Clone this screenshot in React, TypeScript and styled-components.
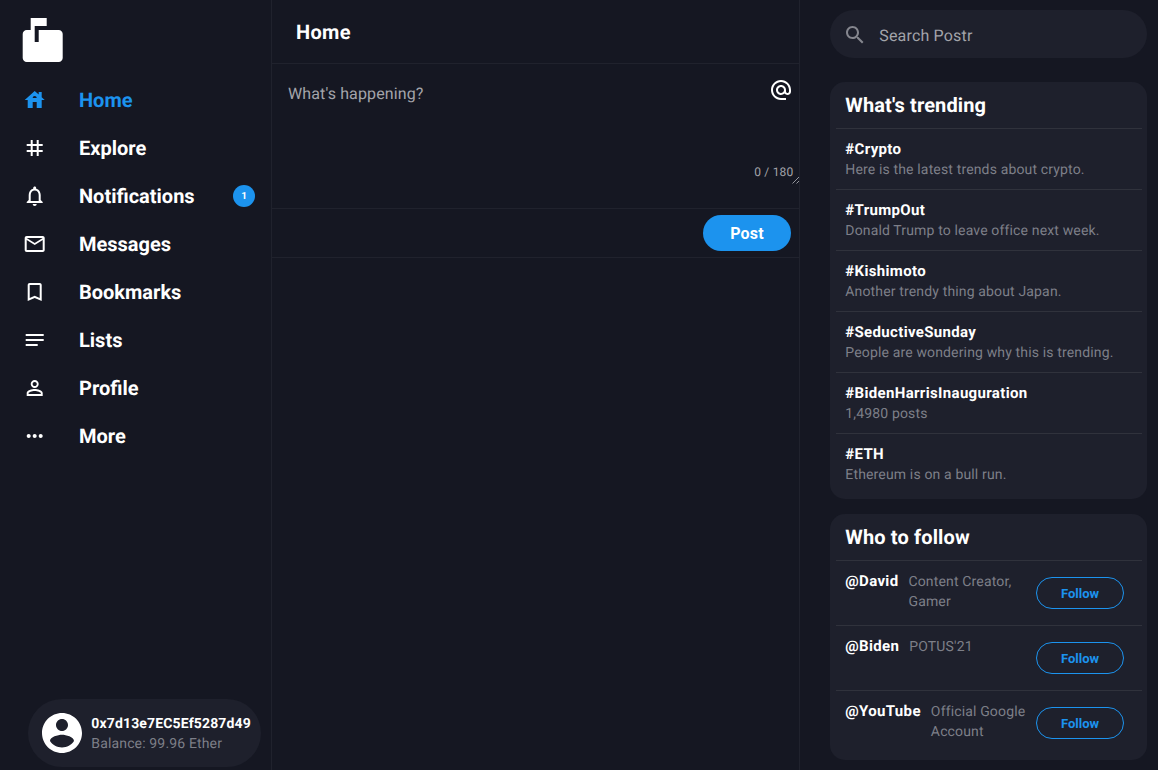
import React from "react";
import styled, { createGlobalStyle } from "styled-components";

const c = {
  bg: "#151722",
  card: "#1e202c",
  line: "#20222d",
  cardLine: "#30323c",
  blue: "#1c93ee",
  muted: "#7d7f88",
};

const Global = createGlobalStyle`
  *, *::before, *::after { box-sizing: border-box; }
  html, body { margin: 0; padding: 0; background: ${c.bg}; }
  body {
    font-family: Roboto, "Liberation Sans", sans-serif;
    color: #fff;
    overflow: hidden;
    text-rendering: geometricPrecision;
    -webkit-font-smoothing: antialiased;
  }
`;

const Page = styled.div`
  display: grid;
  grid-template-columns: 272px 528px 358px;
  width: 1158px;
  height: 770px;
`;

const Sidebar = styled.aside`
  display: flex;
  flex-direction: column;
  border-right: 1px solid ${c.line};
`;

const Logo = styled.div`
  display: flex;
  padding: 18px 0 10px 19px;
`;

const Nav = styled.nav`
  display: flex;
  flex-direction: column;
`;

const NavItem = styled.a<{ $active?: boolean }>`
  display: flex;
  align-items: center;
  height: 48px;
  padding: 0 16px 0 23px;
  color: ${(p) => (p.$active ? c.blue : "#fff")};
`;

const NavLabel = styled.span`
  flex: 1;
  margin-left: 32px;
  font-size: 20px;
  line-height: 24px;
  font-weight: 700;
`;

const Badge = styled.span`
  display: flex;
  align-items: center;
  justify-content: center;
  width: 22px;
  height: 22px;
  border-radius: 50%;
  background: ${c.blue};
  color: #fff;
  font-size: 10px;
  padding-top: 1px;
  font-weight: 700;
`;

const Account = styled.div`
  display: flex;
  align-items: center;
  width: 233px;
  height: 68px;
  margin: auto 0 3px 28px;
  padding-left: 10px;
  border-radius: 34px;
  background: ${c.card};
`;

const AccountText = styled.div`
  margin-left: 5.3px;
  padding-top: 1px;
  white-space: nowrap;
`;

const Feed = styled.main`
  border-right: 1px solid ${c.line};
`;

const FeedHeader = styled.header`
  display: flex;
  align-items: center;
  height: 64px;
  padding-left: 24px;
  border-bottom: 1px solid ${c.line};
  font-size: 20px;
  font-weight: 700;
  letter-spacing: 0.35px;
`;

const Composer = styled.section`
  display: flex;
  justify-content: space-between;
  height: 145px;
  padding: 14px 0 24px 16px;
  border-bottom: 1px solid ${c.line};
`;

const Prompt = styled.div`
  padding-top: 4px;
  font-size: 16px;
  line-height: 24px;
  letter-spacing: 0.12px;
  color: #a3a4aa;
`;

const ComposerSide = styled.div`
  display: flex;
  flex-direction: column;
  justify-content: space-between;
  align-items: flex-end;
`;

const Mention = styled.div`
  display: flex;
  margin-right: 6px;
`;

const Counter = styled.div`
  display: flex;
  align-items: flex-end;
  font-size: 12px;
  line-height: 24px;
  letter-spacing: 0.2px;
  color: #a3a4aa;
`;

const Actions = styled.div`
  display: flex;
  align-items: center;
  justify-content: flex-end;
  height: 49px;
  padding-right: 8px;
  border-bottom: 1px solid ${c.line};
`;

const PostButton = styled.button`
  width: 88px;
  height: 36px;
  padding: 2px 0 0;
  border: 0;
  border-radius: 18px;
  background: ${c.blue};
  color: #fff;
  font: 700 16px/20px Roboto, sans-serif;
  letter-spacing: 0.15px;
`;

const Aside = styled.aside`
  display: flex;
  flex-direction: column;
  padding: 10px 11px 0 30px;
`;

const Search = styled.div`
  display: flex;
  align-items: center;
  flex: none;
  height: 48px;
  padding: 2px 0 0 13px;
  border-radius: 24px;
  background: ${c.card};
  color: #a3a4aa;
  font-size: 16px;
  letter-spacing: 0.17px;
`;

const SearchText = styled.span`
  margin-left: 12.3px;
`;

const Card = styled.section<{ $top: number; $height: number }>`
  flex: none;
  height: ${(p) => p.$height}px;
  margin-top: ${(p) => p.$top}px;
  padding: 0 5px 0 6px;
  border-radius: 15px;
  background: ${c.card};
`;

const CardTitle = styled.h2`
  margin: 0;
  padding: 7px 9px 0 9.3px;
  height: 46px;
  font-size: 20px;
  line-height: 32px;
  font-weight: 700;
  letter-spacing: 0.13px;
`;

const Trend = styled.div`
  height: 61px;
  padding: 10px 9px 0 9.3px;
  border-top: 1px solid ${c.cardLine};
`;

const Strong = styled.div`
  font-size: 15px;
  line-height: 20px;
  font-weight: 700;
  letter-spacing: 0.34px;
`;

const Address = styled(Strong)`
  font-size: 14px;
  letter-spacing: 0.15px;
`;

const Muted = styled.div`
  padding-top: 1px;
  font-size: 14px;
  line-height: 20px;
  letter-spacing: 0.15px;
  color: ${c.muted};
`;

const Balance = styled(Muted)`
  padding-top: 0;
`;

const Person = styled.div`
  display: flex;
  height: 65px;
  padding: 10px 18px 0 9.3px;
  border-top: 1px solid ${c.cardLine};
`;

const Bio = styled(Muted)`
  flex: 1;
  margin: 0 9px 0 10px;
`;

const FollowButton = styled.button`
  flex: none;
  width: 88px;
  height: 32px;
  margin-top: 6px;
  padding: 2px 0 0;
  border: 1px solid ${c.blue};
  border-radius: 16px;
  background: transparent;
  color: ${c.blue};
  font: 700 13px/20px Roboto, sans-serif;
`;

const paths = {
  mailbox:
    "M20 6H10v6H8V4h6V0H6v6H4c-1.1 0-2 .9-2 2v12c0 1.1.9 2 2 2h16c1.1 0 2-.9 2-2V8c0-1.1-.9-2-2-2z",
  house:
    "M19 9.3V4h-3v2.6L12 3 2 12h3v8h5v-6h4v6h5v-8h3l-3-2.7zm-9 .7c0-1.1.9-2 2-2s2 .9 2 2h-4z",
  tag: "M20 10V8h-4V4h-2v4h-4V4H8v4H4v2h4v4H4v2h4v4h2v-4h4v4h2v-4h4v-2h-4v-4h4zm-6 4h-4v-4h4v4z",
  bell: "M12 22c1.1 0 2-.9 2-2h-4c0 1.1.9 2 2 2zm6-6v-5c0-3.07-1.63-5.64-4.5-6.32V4c0-.83-.67-1.5-1.5-1.5s-1.5.67-1.5 1.5v.68C7.64 5.36 6 7.92 6 11v5l-2 2v1h16v-1l-2-2zm-2 1H8v-6c0-2.48 1.51-4.5 4-4.5s4 2.02 4 4.5v6z",
  mail: "M22 6c0-1.1-.9-2-2-2H4c-1.1 0-2 .9-2 2v12c0 1.1.9 2 2 2h16c1.1 0 2-.9 2-2V6zm-2 0l-8 5-8-5h16zm0 12H4V8l8 5 8-5v10z",
  bookmark:
    "M17 3H7c-1.1 0-2 .9-2 2v16l7-3 7 3V5c0-1.1-.9-2-2-2zm0 15l-5-2.18L7 18V5h10v13z",
  notes: "M21 11.01L3 11v2h18zM3 16h12v2H3zM21 6H3v2.01L21 8z",
  person:
    "M12 5.9c1.16 0 2.1.94 2.1 2.1s-.94 2.1-2.1 2.1S9.9 9.16 9.9 8s.94-2.1 2.1-2.1m0 9c2.97 0 6.1 1.46 6.1 2.1v1.1H5.9V17c0-.64 3.13-2.1 6.1-2.1M12 4C9.79 4 8 5.79 8 8s1.79 4 4 4 4-1.79 4-4-1.79-4-4-4zm0 9c-2.67 0-8 1.34-8 4v3h16v-3c0-2.66-5.33-4-8-4z",
  more: "M6 10c-1.1 0-2 .9-2 2s.9 2 2 2 2-.9 2-2-.9-2-2-2zm12 0c-1.1 0-2 .9-2 2s.9 2 2 2 2-.9 2-2-.9-2-2-2zm-6 0c-1.1 0-2 .9-2 2s.9 2 2 2 2-.9 2-2-.9-2-2-2z",
  account:
    "M12 2C6.48 2 2 6.48 2 12s4.48 10 10 10 10-4.48 10-10S17.52 2 12 2zm0 3c1.66 0 3 1.34 3 3s-1.34 3-3 3-3-1.34-3-3 1.34-3 3-3zm0 14.2c-2.5 0-4.71-1.28-6-3.22.03-1.99 4-3.08 6-3.08 1.99 0 5.97 1.09 6 3.08-1.29 1.94-3.5 3.22-6 3.22z",
  at: "M12 1.95c-5.52 0-10 4.48-10 10s4.48 10 10 10h5v-2h-5c-4.34 0-8-3.66-8-8s3.66-8 8-8 8 3.66 8 8v1.43c0 .79-.71 1.57-1.5 1.57s-1.5-.78-1.5-1.57v-1.43c0-2.76-2.24-5-5-5s-5 2.24-5 5 2.24 5 5 5c1.38 0 2.64-.56 3.54-1.47.65.89 1.77 1.47 2.96 1.47 1.97 0 3.5-1.6 3.5-3.57v-1.43c0-5.52-4.48-10-10-10zm0 13c-1.66 0-3-1.34-3-3s1.34-3 3-3 3 1.34 3 3-1.34 3-3 3z",
  search:
    "M15.5 14h-.79l-.28-.27C15.41 12.59 16 11.11 16 9.5 16 5.91 13.09 3 9.5 3S3 5.91 3 9.5 5.91 16 9.5 16c1.61 0 3.09-.59 4.23-1.57l.27.28v.79l5 4.99L20.49 19l-4.99-5zm-6 0C7.01 14 5 11.99 5 9.5S7.01 5 9.5 5 14 7.01 14 9.5 11.99 14 9.5 14z",
};

type IconName = keyof typeof paths;

const Svg = styled.svg`
  flex: none;
`;

type IconProps = { name: IconName; size?: number; color?: string; shift?: number };

const Icon = ({ name, size = 24, color = "currentColor", shift = 0 }: IconProps) => (
  <Svg width={size} height={size} viewBox={`${shift} 0 24 24`} fill={color}>
    <path d={paths[name]} />
  </Svg>
);

const nav: { icon: IconName; label: string; badge?: number }[] = [
  { icon: "house", label: "Home" },
  { icon: "tag", label: "Explore" },
  { icon: "bell", label: "Notifications", badge: 1 },
  { icon: "mail", label: "Messages" },
  { icon: "bookmark", label: "Bookmarks" },
  { icon: "notes", label: "Lists" },
  { icon: "person", label: "Profile" },
  { icon: "more", label: "More" },
];

const trends = [
  ["#Crypto", "Here is the latest trends about crypto."],
  ["#TrumpOut", "Donald Trump to leave office next week."],
  ["#Kishimoto", "Another trendy thing about Japan."],
  ["#SeductiveSunday", "People are wondering why this is trending."],
  ["#BidenHarrisInauguration", "1,4980 posts"],
  ["#ETH", "Ethereum is on a bull run."],
];

const people = [
  ["@David", "Content Creator, Gamer"],
  ["@Biden", "POTUS'21"],
  ["@YouTube", "Official Google Account"],
];

export default function App() {
  return (
    <Page>
      <Global />
      <Sidebar>
        <Logo>
          <Icon name="mailbox" size={48} shift={0.15} />
        </Logo>
        <Nav>
          {nav.map((n, i) => (
            <NavItem key={n.label} $active={i === 0}>
              <Icon name={n.icon} shift={0.3} />
              <NavLabel>{n.label}</NavLabel>
              {n.badge && <Badge>{n.badge}</Badge>}
            </NavItem>
          ))}
        </Nav>
        <Account>
          <Icon name="account" size={48} />
          <AccountText>
            <Address>0x7d13e7EC5Ef5287d49</Address>
            <Balance>Balance: 99.96 Ether</Balance>
          </AccountText>
        </Account>
      </Sidebar>
      <Feed>
        <FeedHeader>Home</FeedHeader>
        <Composer>
          <Prompt>What's happening?</Prompt>
          <ComposerSide>
            <Mention>
              <Icon name="at" />
            </Mention>
            <Counter>
              <span>0 / 180</span>
              <Svg width="5.5" height="24" viewBox="0 0 5.5 24" stroke="#b5b6bb" strokeWidth="0.8" overflow="visible">
                <path d="M-1.5 23.5L5 17M2.5 23.5L5 21" />
              </Svg>
            </Counter>
          </ComposerSide>
        </Composer>
        <Actions>
          <PostButton>Post</PostButton>
        </Actions>
      </Feed>
      <Aside>
        <Search>
          <Icon name="search" color="#85868e" />
          <SearchText>Search Postr</SearchText>
        </Search>
        <Card $top={24} $height={417}>
          <CardTitle>What's trending</CardTitle>
          {trends.map(([tag, text]) => (
            <Trend key={tag}>
              <Strong>{tag}</Strong>
              <Muted>{text}</Muted>
            </Trend>
          ))}
        </Card>
        <Card $top={15} $height={246}>
          <CardTitle>Who to follow</CardTitle>
          {people.map(([name, bio]) => (
            <Person key={name}>
              <Strong>{name}</Strong>
              <Bio>{bio}</Bio>
              <FollowButton>Follow</FollowButton>
            </Person>
          ))}
        </Card>
      </Aside>
    </Page>
  );
}
